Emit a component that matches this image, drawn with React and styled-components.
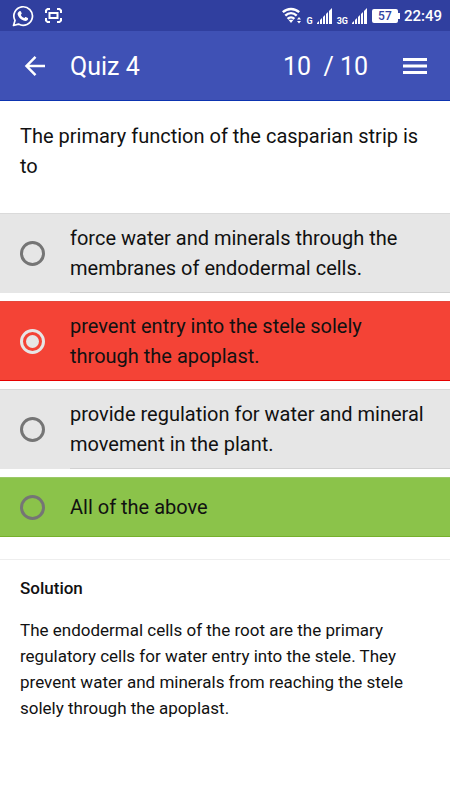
import { useState } from "react";
import styled, { createGlobalStyle } from "styled-components";

const PRIMARY = "#3f51b5";
const PRIMARY_DARK = "#303f9f";
const WRONG = "#f44336";
const RIGHT = "#8bc34a";
const NEUTRAL = "#e6e6e6";

const OPTIONS = [
  { id: "a", text: "force water and minerals through the membranes of endodermal cells." },
  { id: "b", text: "prevent entry into the stele solely through the apoplast.", state: "wrong" },
  { id: "c", text: "provide regulation for water and mineral movement in the plant." },
  { id: "d", text: "All of the above", state: "right" },
];

const ROW_COLORS = {
  wrong: { bg: WRONG, top: "#e5483c", bottom: "#e60000" },
  right: { bg: RIGHT, top: "#9bc968", bottom: "#76b02c" },
  neutral: { bg: NEUTRAL, top: "#dadada", bottom: NEUTRAL },
};

const GlobalStyle = createGlobalStyle`
  * { box-sizing: border-box; }
  body {
    margin: 0;
    background: #fff;
    color: #111;
    font-family: Roboto, "Liberation Sans", sans-serif;
  }
`;

const Page = styled.div`
  min-height: 100vh;
  background: #fff;
`;

const StatusBar = styled.div`
  display: flex;
  align-items: center;
  justify-content: space-between;
  height: 31px;
  padding: 0 8px 0 12px;
  background: ${PRIMARY_DARK};
  color: #fff;
`;

const StatusGroup = styled.div`
  display: flex;
  align-items: center;
  gap: ${(p) => p.$gap}px;
`;

const Battery = styled.span`
  display: flex;
  align-items: center;
  &::after {
    content: "";
    width: 2px;
    height: 6px;
    background: #fff;
  }
`;

const BatteryLevel = styled.span`
  width: 26px;
  border-radius: 2px;
  background: #fff;
  color: ${PRIMARY_DARK};
  font-size: 12px;
  font-weight: 500;
  line-height: 14px;
  text-align: center;
`;

const Clock = styled.span`
  font-size: 15px;
  font-weight: 500;
  line-height: 20px;
`;

const Toolbar = styled.header`
  display: flex;
  align-items: center;
  height: 70px;
  padding: 0 20px;
  background: ${PRIMARY};
  border-bottom: 1px solid #0d34b0;
  color: #fff;
`;

const IconButton = styled.button`
  display: flex;
  padding: 0;
  border: 0;
  background: none;
  color: inherit;
  cursor: pointer;
`;

const Title = styled.h1`
  flex: 1;
  margin: 0 0 0 20px;
  padding-top: 2px;
  font-size: 25px;
  font-weight: 400;
  line-height: 30px;
`;

const Counter = styled.span`
  margin-right: 32px;
  padding-top: 2px;
  font-size: 25px;
  line-height: 30px;
  white-space: pre;
`;

const Question = styled.p`
  margin: 0;
  padding: 20px 20px 32px;
  font-size: 20px;
  line-height: 30px;
`;

const OptionList = styled.div`
  display: flex;
  flex-direction: column;
  gap: 8px;
`;

const OptionRow = styled.label`
  display: flex;
  align-items: center;
  min-height: 60px;
  padding-left: 20px;
  background: ${(p) => p.$colors.bg};
  border-top: 1px solid ${(p) => p.$colors.top};
  border-bottom: ${(p) => (p.$ruled ? 0 : 1)}px solid ${(p) => p.$colors.bottom};
  cursor: pointer;
`;

const Radio = styled.input`
  appearance: none;
  flex: none;
  display: grid;
  place-items: center;
  width: 25px;
  height: 25px;
  margin: 0 25px 0 0;
  border: 3px solid #757575;
  border-radius: 50%;
  &:checked { border-color: ${NEUTRAL}; }
  &:checked::before {
    content: "";
    width: 13px;
    height: 13px;
    border-radius: 50%;
    background: ${NEUTRAL};
  }
`;

const OptionText = styled.span`
  flex: 1;
  padding: 9px 20px 9px 0;
  border-bottom: ${(p) => (p.$ruled ? "1px solid #d2d2d2" : "0")};
  font-size: 20px;
  line-height: 30px;
`;

const Solution = styled.section`
  margin-top: 22px;
  padding: 15px 20px;
  border-top: 1px solid #eee;
`;

const SolutionTitle = styled.h2`
  margin: 0 0 16px;
  font-size: 17px;
  font-weight: 500;
  line-height: 26px;
`;

const SolutionText = styled.p`
  margin: 0;
  font-size: 17px;
  line-height: 26px;
`;

const NetworkLabel = styled.span`
  align-self: flex-end;
  font-size: 9px;
  font-weight: 700;
  line-height: 9px;
`;

function ChatIcon() {
  return (
    <svg width="22" height="22" viewBox="0 0 22 22" fill="none" aria-hidden="true">
      <path
        d="M1.5 20.5 3 15.5A9.3 9.3 0 1 1 6.5 19.1Z"
        stroke="#fff"
        strokeWidth="1.7"
        strokeLinejoin="round"
      />
      <path
        d="M7.4 6.2c.5-.5 1.2-.4 1.500.2l.8 1.900c.1.4-.1.800-.9 1.600.8 1.500 1.900 2.500 3.500 3.200.8-1 1.100-1.300 1.500-1.100l2 1c.5.3.3 1.400-.2 2-1 1-2.400 1.200-4.100.6-2.900-1-5-3.300-5.800-5.800-.4-1.400.4-2.800 1.700-3.600Z"
        fill="#fff"
      />
    </svg>
  );
}

function ScreenshotIcon() {
  return (
    <svg width="17" height="15" viewBox="0 0 17 15" fill="none" stroke="#fff" strokeWidth="2" aria-hidden="true">
      <path d="M1 5V2.500L2.500 1H5M12 1h2.500L16 2.500V5M16 10v2.500L14.500 14H12M5 14H2.500L1 12.500V10" />
      <rect x="4.500" y="5" width="8" height="5" />
    </svg>
  );
}

function WifiIcon() {
  return (
    <svg width="20" height="17" viewBox="0 0 20 17" fill="none" stroke="#fff" strokeWidth="2.400" aria-hidden="true">
      <path d="M.8 5.200C5.500.9 12.500.9 17.200 5.200M3.300 8.600c3.400-3.200 8-3.200 11.400 0M5.600 11.800c2-1.900 4.800-1.900 6.800 0" />
      <path d="M6.500 12.800h5L9 16Z" fill="#fff" stroke="none" />
      <path d="m15 12.500 2-2.500 2 2.500ZM15 14l2 2.500 2-2.500Z" fill="#fff" stroke="none" />
    </svg>
  );
}

function SignalIcon() {
  return (
    <svg width="16" height="16" viewBox="0 0 16 16" fill="#fff" aria-hidden="true">
      <path d="M0 16v-1l2-2v3ZM3 16v-4l2-2v6ZM6 16V9l2-2v9ZM9 16V6l2-2v12Z" />
      <path d="M12 16V3l3-3v16Z" />
    </svg>
  );
}

function BackIcon() {
  return (
    <svg width="30" height="30" viewBox="0 0 30 30" fill="none" stroke="#fff" strokeWidth="2.500" aria-hidden="true">
      <path d="M25 15H7M15.500 5.800 6.500 15l9 9.200" />
    </svg>
  );
}

function MenuIcon() {
  return (
    <svg width="30" height="30" viewBox="0 0 30 30" fill="#fff" aria-hidden="true">
      <path d="M3 7h24v3H3zM3 13.500h24v3H3zM3 20h24v3H3z" />
    </svg>
  );
}

export default function App() {
  const [selected, setSelected] = useState("b");

  return (
    <Page>
      <GlobalStyle />
      <StatusBar>
        <StatusGroup $gap={11}>
          <ChatIcon />
          <ScreenshotIcon />
        </StatusGroup>
        <StatusGroup $gap={4}>
          <WifiIcon />
          <NetworkLabel>G</NetworkLabel>
          <SignalIcon />
          <NetworkLabel>3G</NetworkLabel>
          <SignalIcon />
          <Battery>
            <BatteryLevel>57</BatteryLevel>
          </Battery>
          <Clock>22:49</Clock>
        </StatusGroup>
      </StatusBar>
      <Toolbar>
        <IconButton type="button" aria-label="Back">
          <BackIcon />
        </IconButton>
        <Title>Quiz 4</Title>
        <Counter>{"10  / 10"}</Counter>
        <IconButton type="button" aria-label="Menu">
          <MenuIcon />
        </IconButton>
      </Toolbar>
      <main>
        <Question id="question">The primary function of the casparian strip is to</Question>
        <OptionList role="radiogroup" aria-labelledby="question">
          {OPTIONS.map((option) => (
            <OptionRow
              key={option.id}
              htmlFor={`option-${option.id}`}
              $colors={ROW_COLORS[option.state || "neutral"]}
              $ruled={!option.state}
            >
              <Radio
                type="radio"
                name="answer"
                id={`option-${option.id}`}
                checked={selected === option.id}
                onChange={() => setSelected(option.id)}
              />
              <OptionText $ruled={!option.state}>{option.text}</OptionText>
            </OptionRow>
          ))}
        </OptionList>
        <Solution>
          <SolutionTitle>Solution</SolutionTitle>
          <SolutionText>
            The endodermal cells of the root are the primary regulatory cells for water entry into the stele. They
            prevent water and minerals from reaching the stele solely through the apoplast.
          </SolutionText>
        </Solution>
      </main>
    </Page>
  );
}
